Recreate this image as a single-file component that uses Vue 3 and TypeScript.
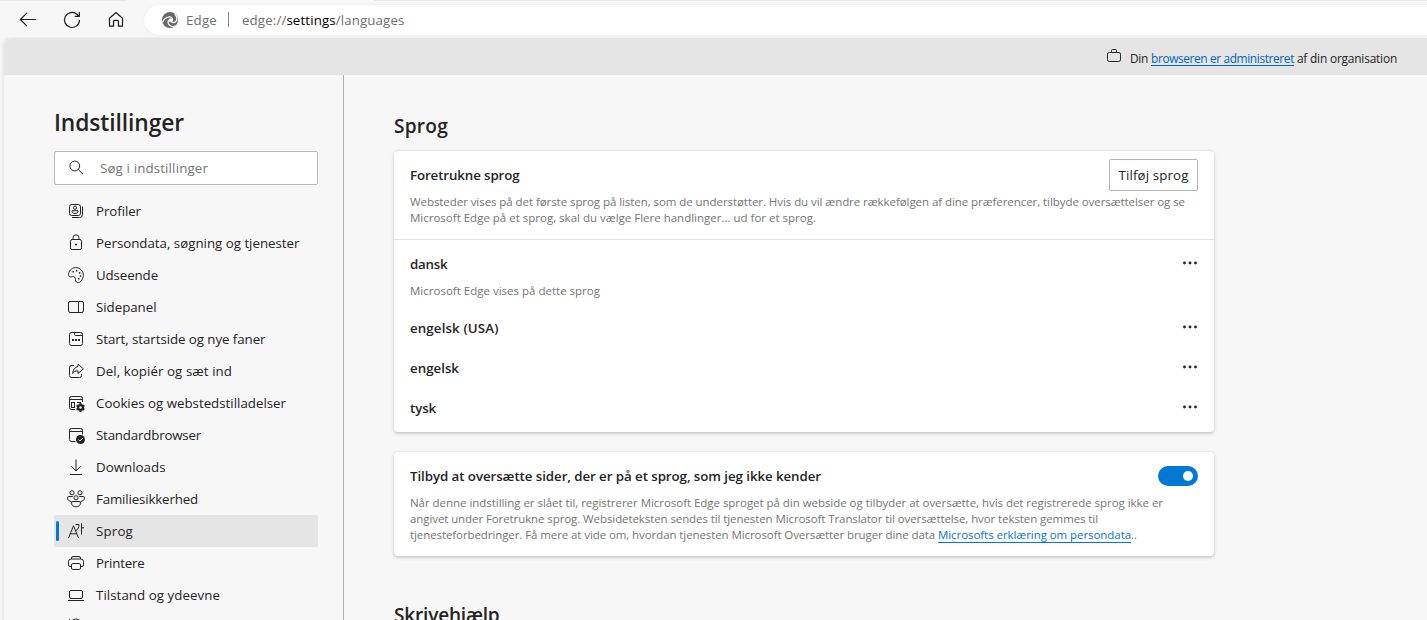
<script setup lang="ts">
import type { Directive } from 'vue'

interface NavItem {
  label: string
  width: number
  icon: string
  active?: boolean
}

interface Language {
  name: string
  width: number
  note?: string
}

// Tracks a run of text so that it occupies the given measure in pixels.
const vFit: Directive<HTMLElement, number> = {
  mounted(el, { value }) {
    const count = (el.textContent ?? '').length
    const natural = el.getBoundingClientRect().width
    if (count > 0) el.style.letterSpacing = `${(value - natural) / count}px`
  },
}

const nav: NavItem[] = [
  { label: 'Profiler', width: 45, icon: 'profile' },
  { label: 'Persondata, søgning og tjenester', width: 203.5, icon: 'lock' },
  { label: 'Udseende', width: 62, icon: 'palette' },
  { label: 'Sidepanel', width: 60.5, icon: 'panel' },
  { label: 'Start, startside og nye faner', width: 169.5, icon: 'start' },
  { label: 'Del, kopiér og sæt ind', width: 136, icon: 'share' },
  { label: 'Cookies og webstedstilladelser', width: 190, icon: 'cookies' },
  { label: 'Standardbrowser', width: 105, icon: 'default' },
  { label: 'Downloads', width: 69.5, icon: 'download' },
  { label: 'Familiesikkerhed', width: 102, icon: 'family' },
  { label: 'Sprog', width: 37, icon: 'language', active: true },
  { label: 'Printere', width: 48.5, icon: 'printer' },
  { label: 'Tilstand og ydeevne', width: 124, icon: 'laptop' },
  { label: '', width: 0, icon: 'reset' },
]

const languages: Language[] = [
  { name: 'dansk', width: 37.5, note: 'Microsoft Edge vises på dette sprog' },
  { name: 'engelsk (USA)', width: 88.5 },
  { name: 'engelsk', width: 49 },
  { name: 'tysk', width: 26 },
]
</script>

<template>
  <div class="browser">
    <div class="tabs"><i class="tab-left"></i><i class="tab-right"></i></div>
    <header class="toolbar">
      <svg class="tool" viewBox="0 0 20 20"><path d="M18 9.5H2.5M9 2.8L2.3 9.5L9 16.2" /></svg>
      <svg class="tool" viewBox="0 0 20 20"><path d="M17.5 10A7.5 7.5 0 1 1 14.8 4.2L16.8 6M17.3 2V6.3H12.8" /></svg>
      <svg class="tool" viewBox="0 0 20 20"><path d="M3.5 8.2L10 2.6L16.5 8.2V16.2H12.5V11.5Q12.5 10.3 11.3 10.3H8.7Q7.5 10.3 7.5 11.5V16.2H3.5Z" /></svg>
      <div class="address">
        <svg class="edge" viewBox="0 0 16 16">
          <circle cx="8" cy="8" r="8" fill="#686868" />
          <circle cx="8.8" cy="8.2" r="2" fill="#fff" />
          <g fill="none" stroke="#fff" stroke-width="1.2">
            <path d="M10.6 8C10.8 5.3 8.4 4.6 6.2 5.1C3.6 5.7 1.6 7.4 .6 10.4" />
            <path d="M7 7.8C5.3 9.5 6 12 7.8 13.4C9.4 14.6 12 15 14.2 13.6" />
            <path d="M9 9.8C11.2 11 13.4 10.4 14.4 8.6C15.4 6.8 14.6 4 12.6 1.6" />
          </g>
        </svg>
        <span v-fit="31" class="scheme">Edge</span>
        <i class="bar"></i>
        <span v-fit="162.5" class="url">edge://<b>settings</b>/languages</span>
      </div>
    </header>

    <div class="page">
      <div class="banner">
        <svg class="case" viewBox="0 0 16 16"><rect x="1.5" y="4.5" width="13" height="9" rx="1.7" /><path d="M5.5 4.5V2.5Q5.5 1.5 6.5 1.5H9.5Q10.5 1.5 10.5 2.5V4.5" /></svg>
        <span class="managed"><span v-fit="21">Din </span><a v-fit="143">browseren er administreret</a><span v-fit="103"> af din organisation</span></span>
      </div>
      <div class="body">
        <aside class="side">
          <h1><span v-fit="130">Indstillinger</span></h1>
          <div class="search">
            <svg class="icon" viewBox="0 0 20 20"><circle cx="8.8" cy="8" r="4.9" /><path d="M12.4 11.6L17 16.2" /></svg>
            <span v-fit="108">Søg i indstillinger</span>
          </div>
          <nav>
            <div v-for="item in nav" :key="item.icon" class="item" :class="{ active: item.active }">
              <svg class="icon" viewBox="0 0 20 20">
                <g v-if="item.icon === 'profile'"><rect x="3.5" y="3.5" width="11" height="11" rx="2.2" /><circle cx="9" cy="6.7" r="1.6" /><path d="M6 9.7H12V10.6C12 13.1 6 13.1 6 10.6ZM16.5 5.5V13.5Q16.5 16.5 13.5 16.5H6" /></g>
                <g v-else-if="item.icon === 'lock'"><rect x="4.5" y="6.5" width="11" height="10" rx="1.6" /><path d="M7 6.5V4.8A3 3 0 0 1 13 4.8V6.5" /><circle class="solid" cx="10" cy="11.5" r="1" /></g>
                <g v-else-if="item.icon === 'palette'"><path d="M2.6 9.2C3 4.6 7.2 2 11 2.7C15.8 3.6 18.2 8 17 12.4C16 16.5 12.8 18.6 10.6 17.2C8.6 15.8 10.2 13.7 8.6 12C7.3 10.7 6 12.1 4.2 12C3 11.9 2.5 10.6 2.6 9.2Z" /><g class="solid"><circle cx="7.2" cy="6.7" r=".85" /><circle cx="10.6" cy="5.7" r=".85" /><circle cx="13.6" cy="7.8" r=".85" /><circle cx="14.5" cy="11" r=".85" /><circle cx="12.7" cy="13.7" r=".85" /></g></g>
                <g v-else-if="item.icon === 'panel'"><rect x="2.5" y="4.5" width="15" height="11" rx="1.6" /><path d="M12.5 4.5V15.5" /></g>
                <g v-else-if="item.icon === 'start'"><rect x="3.5" y="3.5" width="13" height="13" rx="2" /><path d="M8.5 3.5V5.3Q8.5 6.5 9.7 6.5H16.5" /><g class="solid"><rect x="6" y="10" width="2" height="2" /><rect x="9" y="10" width="2" height="2" /><rect x="12" y="10" width="2" height="2" /></g></g>
                <g v-else-if="item.icon === 'share'"><path d="M8 4.5H5.5Q3.5 4.5 3.5 6.5V14.5Q3.5 16.5 5.5 16.5H13.5Q15.5 16.5 15.5 14.5V13" /><path d="M12 3L17.4 7.9L12 12.5V9.9C9.5 9.7 7.9 10.7 6.6 12.5C7 8.6 8.8 6.1 12 5.6Z" /></g>
                <g v-else-if="item.icon === 'cookies'"><path d="M16.5 9V5.5Q16.5 3.5 14.5 3.5H5.5Q3.5 3.5 3.5 5.5V14.5Q3.5 16.5 5.5 16.5H9M3.5 6.5H16.5M11 9.5H15" /><rect x="5.5" y="9.5" width="3" height="5" /><circle class="solid" cx="14.5" cy="14.5" r="3.5" /><path d="M14.5 10V19M10.6 12.3L18.4 16.7M10.6 16.7L18.4 12.3" stroke-width="2" /><circle class="hole" cx="14.5" cy="14.5" r="1.2" /></g>
                <g v-else-if="item.icon === 'default'"><path d="M16.5 9.5V5.5Q16.5 3.5 14.5 3.5H5.5Q3.5 3.5 3.5 5.5V14.5Q3.5 16.5 5.5 16.5H9.5M3.5 6.5H16.5" /><circle class="solid" cx="14.5" cy="14.5" r="4.5" /><path class="check" d="M12.5 14.7L13.9 16L16.6 13.2" /></g>
                <g v-else-if="item.icon === 'download'"><path d="M10 2.5V14M5.5 9.5L10 14L14.5 9.5M4 17.5H16" /></g>
                <g v-else-if="item.icon === 'family'"><circle cx="6" cy="3.8" r="2.1" /><circle cx="14" cy="3.8" r="2.1" /><circle cx="10" cy="8.8" r="2.1" /><path d="M6.8 7.5H2.8Q1.5 7.5 1.5 8.8C1.5 11 3.2 12.4 5.5 12.4M13.2 7.5H17.2Q18.5 7.5 18.5 8.8C18.5 11 16.8 12.4 14.5 12.4M7 12.5H13Q14.5 12.5 14.5 13.8C14.5 16.4 12.7 17.8 10 17.8C7.3 17.8 5.5 16.4 5.5 13.8Q5.5 12.5 7 12.5Z" /></g>
                <g v-else-if="item.icon === 'language'"><path d="M2.5 17L7.5 4.8L12.5 17M4.2 12.8H10.8M9.5 3.5H13C13 6.4 12 8.3 9.8 9.7M15.5 2.3V13.5M15.5 6.8H18" /></g>
                <g v-else-if="item.icon === 'printer'"><path d="M5.5 6V5Q5.5 3.5 7 3.5H13Q14.5 3.5 14.5 5V6M5.5 13.5H4.2Q2.5 13.5 2.5 11.8V8.5Q2.5 6 5 6H15Q17.5 6 17.5 8.5V11.8Q17.5 13.5 15.8 13.5H14.5" /><rect x="5.5" y="10.5" width="9" height="6" rx="1.4" /></g>
                <g v-else-if="item.icon === 'laptop'"><rect x="3.5" y="5.5" width="13" height="8" rx="1.5" /><path d="M2 15.5H18" /></g>
                <g v-else><path d="M3.5 2V6.5H8M3.9 6.2C6 1.4 12.5 .6 15.5 5" /></g>
              </svg>
              <span v-if="item.label" v-fit="item.width">{{ item.label }}</span>
            </div>
          </nav>
        </aside>

        <main class="main">
          <h2><span v-fit="54">Sprog</span></h2>
          <section class="card">
            <div class="intro">
              <div class="row">
                <span v-fit="109.5" class="strong">Foretrukne sprog</span>
                <button type="button"><span v-fit="70">Tilføj sprog</span></button>
              </div>
              <p>
                <span v-fit="775">Websteder vises på det første sprog på listen, som de understøtter. Hvis du vil ændre rækkefølgen af dine præferencer, tilbyde oversættelser og se</span><br />
                <span v-fit="406">Microsoft Edge på et sprog, skal du vælge Flere handlinger... ud for et sprog.</span>
              </p>
            </div>
            <div class="langs">
              <div v-for="lang in languages" :key="lang.name" class="lang">
                <div class="row tall">
                  <span v-fit="lang.width" class="strong">{{ lang.name }}</span>
                  <svg class="dots" viewBox="0 0 16 4"><circle cx="2.5" cy="2" r="1.45" /><circle cx="8" cy="2" r="1.45" /><circle cx="13.5" cy="2" r="1.45" /></svg>
                </div>
                <p v-if="lang.note" class="note"><span v-fit="190">{{ lang.note }}</span></p>
              </div>
            </div>
          </section>

          <section class="card translate">
            <div class="row">
              <span v-fit="411" class="strong">Tilbyd at oversætte sider, der er på et sprog, som jeg ikke kender</span>
              <span class="toggle"><i></i></span>
            </div>
            <p>
              <span v-fit="753">Når denne indstilling er slået til, registrerer Microsoft Edge sproget på din webside og tilbyder at oversætte, hvis det registrerede sprog ikke er</span><br />
              <span v-fit="688">angivet under Foretrukne sprog. Websideteksten sendes til tjenesten Microsoft Translator til oversættelse, hvor teksten gemmes til</span><br />
              <span v-fit="528">tjenesteforbedringer. Få mere at vide om, hvordan tjenesten Microsoft Oversætter bruger dine data </span><a v-fit="193">Microsofts erklæring om persondata</a>..
            </p>
          </section>
          <h2 class="next"><span v-fit="105.5">Skrivehjælp</span></h2>
        </main>
      </div>
    </div>
  </div>
</template>

<style>
html,
body {
  margin: 0;
  overflow: hidden;
}
</style>

<style scoped>
.browser {
  display: flex;
  flex-direction: column;
  width: 1427px;
  height: 620px;
  overflow: hidden;
  background: #f7f7f7;
  color: #242424;
  font: 13.3px/20px 'Open Sans', 'Noto Sans', sans-serif;
}
.browser * {
  box-sizing: border-box;
}
span,
a {
  white-space: pre;
}
svg {
  display: block;
  flex: none;
  fill: none;
  stroke: currentColor;
}
.tabs {
  display: flex;
  justify-content: space-between;
  height: 1px;
}
.tab-left {
  width: 127px;
  background: #e8e8e8;
}
.tab-right {
  width: 1053px;
  background: #e8e8e8;
}
.toolbar {
  display: flex;
  align-items: center;
  gap: 24px;
  height: 37px;
  padding-left: 18px;
}
.tool {
  width: 20px;
  height: 20px;
  color: #1c1c1c;
  stroke-width: 1.2;
}
.address {
  display: flex;
  flex: 1;
  align-items: center;
  height: 30px;
  margin-left: -6px;
  padding-left: 18px;
  border-radius: 15px 0 0 15px;
  background: #fff;
  box-shadow: 0 0 2px #e4e4e4;
  color: #6f6f6f;
}
.edge {
  width: 16px;
  height: 16px;
  margin-right: 8px;
  stroke: none;
}
.bar {
  width: 1px;
  height: 15px;
  margin: 0 13px 0 11px;
  background: #8a8a8a;
}
.url b {
  color: #000;
  font-weight: 400;
}
.page {
  display: flex;
  flex: 1;
  flex-direction: column;
  min-height: 0;
  margin-left: 3px;
  border-left: 1px solid #ececec;
  border-top-left-radius: 8px;
  box-shadow: 0 0 3px #ddd;
  overflow: hidden;
}
.banner {
  display: flex;
  flex: none;
  align-items: center;
  justify-content: flex-end;
  height: 37px;
  padding-right: 30px;
  padding-top: 2px;
  background: #e5e5e5;
  font-size: 11.9px;
}
.case {
  width: 16px;
  height: 16px;
  margin: -3px 8px 0 0;
}
.managed {
  display: flex;
}
.banner a {
  color: #0067b8;
  height: 18px;
  border-bottom: 1px solid #0067b8;
}
.body {
  display: flex;
  flex: 1;
  min-height: 0;
}
.side {
  flex: none;
  width: 340px;
  padding: 32px 25px 0 50px;
  border-right: 1px solid #b0b0b0;
}
h1,
h2,
p {
  margin: 0;
  font-weight: 400;
}
h1 {
  height: 44px;
  font-size: 22.8px;
  font-weight: 560;
  line-height: 32px;
}
.search {
  display: flex;
  align-items: center;
  gap: 13px;
  width: 264px;
  height: 34px;
  padding-left: 12px;
  border: 1px solid #b8b8b8;
  border-radius: 2px;
  background: #fff;
  color: #757575;
}
.search .icon {
  margin-left: -1px;
  margin-right: 1px;
  color: #242424;
}
nav {
  margin-top: 10px;
}
.item {
  display: flex;
  align-items: center;
  gap: 10px;
  width: 264px;
  height: 32px;
  padding-left: 12px;
}
.icon {
  width: 20px;
  height: 20px;
}
.icon .solid {
  fill: currentColor;
  stroke: none;
}
.icon .hole {
  fill: #f7f7f7;
  stroke: none;
}
.icon .check {
  stroke: #f7f7f7;
}
.active {
  border-radius: 2px;
  background: #e5e5e5;
  padding-left: 2px;
}
.active::before {
  width: 3px;
  height: 20px;
  margin-right: -3px;
  border-radius: 2px;
  background: #0078d4;
  content: '';
}
.main {
  width: 870px;
  padding: 37px 0 0 50px;
}
h2 {
  height: 39px;
  font-size: 19.1px;
  font-weight: 560;
  line-height: 28px;
}
.card {
  width: 820px;
  border-radius: 4px;
  background: #fff;
  box-shadow: 0 1.6px 3.6px rgba(0, 0, 0, 0.16), 0 0 2px rgba(0, 0, 0, 0.12);
}
.intro {
  height: 89px;
  padding: 8px 16px 0;
  border-bottom: 1px solid #e5e5e5;
}
.row {
  display: flex;
  align-items: center;
  justify-content: space-between;
  height: 32px;
}
.tall {
  height: 40px;
}
.strong {
  font-weight: 560;
}
button {
  width: 89px;
  height: 32px;
  padding: 0;
  border: 1px solid #b4b4b4;
  border-radius: 2px;
  background: #fff;
  color: #242424;
  font: inherit;
}
p {
  color: #757575;
  font-size: 11.5px;
  line-height: 16px;
}
.intro p {
  margin-top: 3px;
}
.langs {
  padding: 4px 16px;
}
.note {
  height: 24px;
  margin-top: -1px;
  margin-bottom: 1px;
}
.dots {
  width: 16px;
  height: 4px;
  margin-top: -2px;
  fill: #242424;
  stroke: none;
}
.translate {
  height: 104px;
  margin-top: 20px;
  padding: 8px 16px 0;
}
.translate p {
  margin-top: 3px;
}
.translate a {
  display: inline-block;
  height: 16px;
  border-bottom: 1px solid #0078d4;
  color: #0078d4;
  vertical-align: top;
}
.toggle {
  display: flex;
  align-items: center;
  justify-content: flex-end;
  width: 40px;
  height: 20px;
  padding-right: 5px;
  border-radius: 10px;
  background: #0078d4;
}
.toggle i {
  width: 10px;
  height: 10px;
  border-radius: 50%;
  background: #fff;
}
.next {
  margin-top: 45px;
}
</style>
